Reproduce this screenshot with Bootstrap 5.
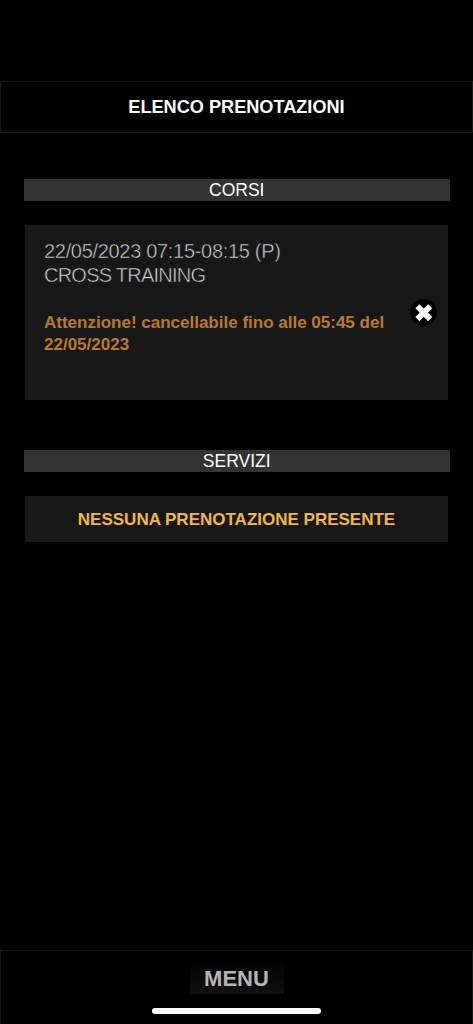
<!DOCTYPE html>
<html lang="it">
<head>
<meta charset="utf-8">
<meta name="viewport" content="width=device-width, initial-scale=1">
<title>Elenco prenotazioni</title>
<link href="https://cdn.jsdelivr.net/npm/bootstrap@5.3.0/dist/css/bootstrap.min.css" rel="stylesheet">
<style>
body { background: #000; color: #fff; font-family: "Liberation Sans", Arial, sans-serif; overflow: hidden; }
.page-bar { margin-top: 81px; height: 52px; border: 1px solid #171717; font-size: 18.15px; line-height: 20px; }
.page-main { padding: 46px 24px 0; }
.section-title { height: 22px; margin-right: -.5px; background: #333; font-size: 17.5px; line-height: 22px; }
.panel { background: #171717; margin: 24px 1px 0; }
.booking { height: 175px; padding: 14px 11px 0 19px; margin-bottom: 50px; }
/* the panel-coloured stroke thins the letters down to a light weight */
.booking-info { font-size: 20px; line-height: 24px; color: #d4d4d4; -webkit-text-stroke: .5px #171717; }
.booking-date { letter-spacing: -.31px; }
.booking-name { letter-spacing: -.76px; }
.booking-note { margin-top: 25px; font-size: 17px; line-height: 22px; color: #bc7a28; }
.cancel-btn { width: 27px; height: 27px; margin-top: 60px; background: #000; }
.empty-note { height: 46px; padding-top: 1px; font-size: 17px; color: #f0b840; }
.menu-bar { height: 74px; border: 1px solid #171717; border-bottom: 0; padding-top: 11px; }
.menu-btn { width: 94px; height: 32px; border-radius: 0; background: linear-gradient(#020202, #111); color: #b5b5b5; font-size: 22px; line-height: 34px; }
.home-line { width: 169px; height: 6px; margin-top: 14px; background: #fff; }
</style>
</head>
<body class="d-flex flex-column vh-100">
<header class="page-bar d-flex align-items-center justify-content-center fw-bold flex-shrink-0">ELENCO PRENOTAZIONI</header>
<main class="page-main flex-grow-1">
  <section>
    <div class="section-title text-center">CORSI</div>
    <div class="panel booking d-flex justify-content-between align-items-start">
      <div class="text-nowrap">
        <div class="booking-info"><span class="booking-date">22/05/2023 07:15-08:15 (P)</span><br><span class="booking-name">CROSS TRAINING</span></div>
        <div class="booking-note fw-bold">Attenzione! cancellabile fino alle 05:45 del<br>22/05/2023</div>
      </div>
      <button type="button" class="cancel-btn btn p-0 border-0 rounded-circle d-flex flex-shrink-0" aria-label="Annulla">
        <svg width="27" height="27" viewBox="0 0 27 27"><path d="M7.4 7.3l12.8 12.8M20.2 7.3L7.4 20.1" stroke="#fff" stroke-width="5.8" fill="none"/></svg>
      </button>
    </div>
  </section>
  <section>
    <div class="section-title text-center">SERVIZI</div>
    <div class="panel empty-note d-flex align-items-center justify-content-center fw-bold">NESSUNA PRENOTAZIONE PRESENTE</div>
  </section>
</main>
<footer class="menu-bar d-flex flex-column align-items-center flex-shrink-0">
  <button type="button" class="menu-btn btn p-0 border-0 fw-bold">MENU</button>
  <div class="home-line rounded-pill"></div>
</footer>
<script src="https://cdn.jsdelivr.net/npm/bootstrap@5.3.0/dist/js/bootstrap.bundle.min.js"></script>
</body>
</html>
